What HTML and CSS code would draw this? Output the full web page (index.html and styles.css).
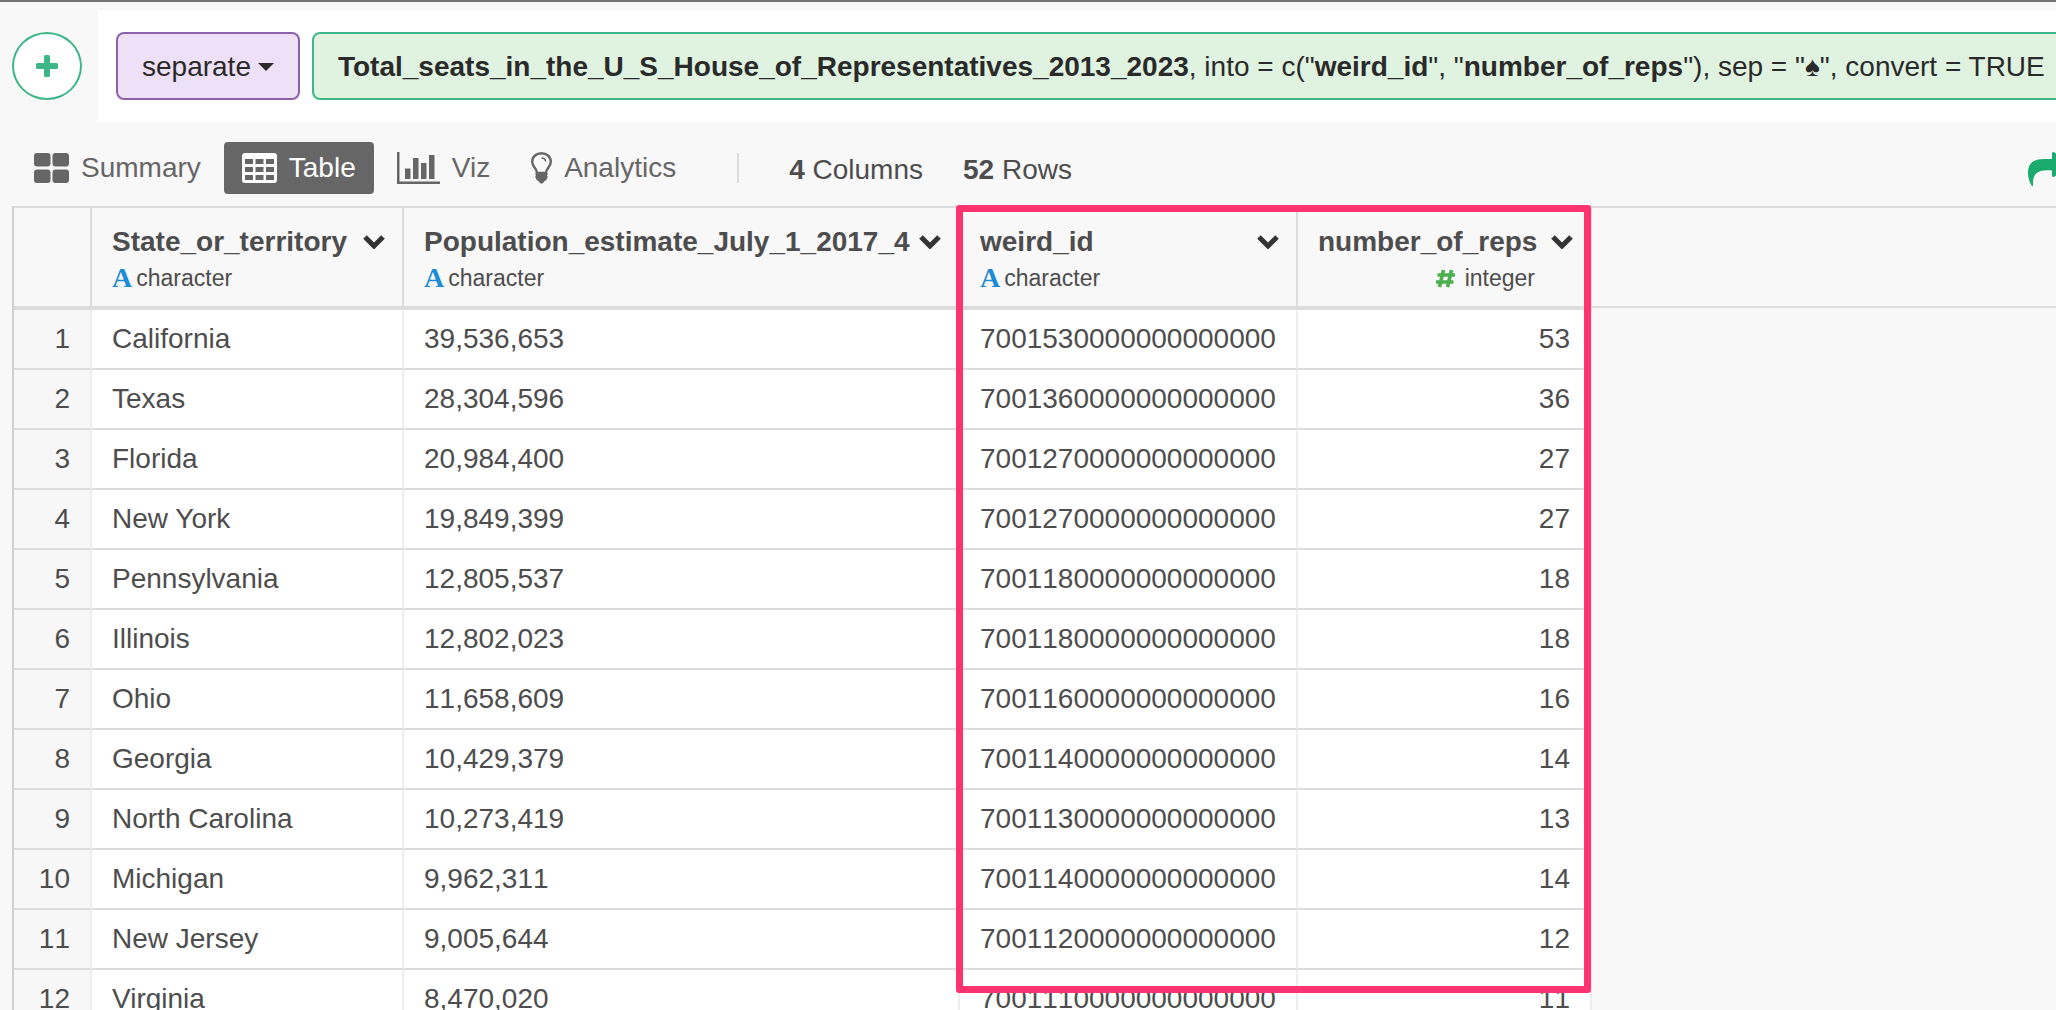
FILE: index.html
```html
<!DOCTYPE html>
<html lang="en">
<head>
  <meta charset="UTF-8">
  <meta name="viewport" content="width=device-width, initial-scale=1.0">
  <title>Data Table</title>
  <link rel="stylesheet" href="styles.css">
</head>
<body>
  <header class="command-bar">
    <button class="add-step" type="button" aria-label="Add step">
      <svg width="22" height="22" viewBox="0 0 22 22"><path d="M8 1.500A1.500 1.500 0 0 1 9.500 0h3A1.500 1.500 0 0 1 14 1.500V8h6.500A1.500 1.500 0 0 1 22 9.500v3a1.500 1.500 0 0 1-1.500 1.500H14v6.500a1.500 1.500 0 0 1-1.500 1.500h-3A1.500 1.500 0 0 1 8 20.500V14H1.500A1.500 1.500 0 0 1 0 12.500v-3A1.500 1.500 0 0 1 1.500 8H8z"/></svg>
    </button>
    <div class="command">
      <button class="verb" type="button">separate
        <svg width="16" height="8" viewBox="0 0 16 8"><path d="M0 0h16L8 8z"/></svg>
      </button>
      <button class="args" type="button"><b>Total_seats_in_the_U_S_House_of_Representatives_2013_2023</b>, into = c("<b>weird_id</b>", "<b>number_of_reps</b>"), sep = "♠", convert = TRUE</button>
    </div>
  </header>

  <nav class="toolbar">
    <button class="tab" type="button">
      <svg width="35" height="30" viewBox="0 0 35 30"><rect width="16.500" height="13.500" rx="3"/><rect x="18.500" width="16.500" height="13.500" rx="3"/><rect y="16.500" width="16.500" height="13.500" rx="3"/><rect x="18.500" y="16.500" width="16.500" height="13.500" rx="3"/></svg>
      Summary
    </button>
    <button class="tab active" type="button">
      <svg width="35" height="30" viewBox="0 0 35 30"><path fill-rule="evenodd" d="M3 0h29a3 3 0 0 1 3 3v24a3 3 0 0 1-3 3H3a3 3 0 0 1-3-3V3a3 3 0 0 1 3-3zM3 6v5h8V6zm10.500 0v5h8V6zM24 6v5h8V6zM3 14v5h8v-5zm10.500 0v5h8v-5zM24 14v5h8v-5zM3 22v5h8v-5zm10.500 0v5h8v-5zM24 22v5h8v-5z"/></svg>
      Table
    </button>
    <button class="tab" type="button">
      <svg width="43" height="32" viewBox="0 0 43 32"><path d="M0 0h2.500v29.500H43V32H0zM8 16.500h5.500V27H8zM16 6h5.500v21H16zM24 11h5.500v16H24zM32 3h5.500v24H32z"/></svg>
      Viz
    </button>
    <button class="tab" type="button">
      <svg width="21" height="32" viewBox="0 0 21 32"><path class="outline" d="M6 21C6 16.500 1.200 15 1.200 9.800 1.200 4.500 5.500 1.200 10.500 1.200s9.300 3.300 9.300 8.600c0 5.200-4.800 6.700-4.800 11.200z"/><path class="glint" d="M10.500 6c2.500 0 4 1.200 4 3.500"/><path d="M5 20.500h11c.8 1 .8 2 0 3 .8 1 .8 2 0 3-.5 2-2 2.500-3 3-.5 1.500-1.500 2-2.500 2s-2-.5-2.500-2c-1-.5-2.500-1-3-3-.8-1-.8-2 0-3-.8-1-.8-2 0-3z"/></svg>
      Analytics
    </button>
    <span class="divider"></span>
    <span class="count"><b>4</b> Columns</span>
    <span class="count"><b>52</b> Rows</span>
    <button class="share" type="button" aria-label="Share">
      <svg width="44" height="36" viewBox="0 0 44 36"><path d="M24 7V1.500c0-1.500 1.500-2 2.500-1L42 12c1 .8 1 1.800 0 2.500L26.500 24.500c-1 1-2.500.5-2.500-1V18.500c-12-1-19.500 1-19 14.500 0 1.500-1 1.500-1.500.5C1.500 30 0 26 0 21 0 10 7 7 16 7z"/></svg>
    </button>
  </nav>

  <main class="grid">
    <table class="data">
      <colgroup>
        <col class="col-index"><col class="col-state"><col class="col-population"><col class="col-id"><col class="col-reps">
      </colgroup>
      <thead>
        <tr>
          <td></td>
          <th scope="col">
            <div class="name">State_or_territory <svg width="22" height="14" viewBox="0 0 22 14"><path d="M2 2l9 9 9-9"/></svg></div>
            <div class="type"><span class="type-text">A</span>character</div>
          </th>
          <th scope="col">
            <div class="name">Population_estimate_July_1_2017_4 <svg width="22" height="14" viewBox="0 0 22 14"><path d="M2 2l9 9 9-9"/></svg></div>
            <div class="type"><span class="type-text">A</span>character</div>
          </th>
          <th scope="col">
            <div class="name">weird_id <svg width="22" height="14" viewBox="0 0 22 14"><path d="M2 2l9 9 9-9"/></svg></div>
            <div class="type"><span class="type-text">A</span>character</div>
          </th>
          <th scope="col">
            <div class="name">number_of_reps <svg width="22" height="14" viewBox="0 0 22 14"><path d="M2 2l9 9 9-9"/></svg></div>
            <div class="type numeric"><svg class="type-number" width="21" height="19" viewBox="0 0 21 19"><path d="M8.500 1L4.500 18M16.500 1l-4 17M2.500 6H20M1 13h17.500"/></svg>integer</div>
          </th>
        </tr>
      </thead>
      <tbody>
        <tr><td>1</td><td>California</td><td>39,536,653</td><td>7001530000000000000</td><td>53</td></tr>
        <tr><td>2</td><td>Texas</td><td>28,304,596</td><td>7001360000000000000</td><td>36</td></tr>
        <tr><td>3</td><td>Florida</td><td>20,984,400</td><td>7001270000000000000</td><td>27</td></tr>
        <tr><td>4</td><td>New York</td><td>19,849,399</td><td>7001270000000000000</td><td>27</td></tr>
        <tr><td>5</td><td>Pennsylvania</td><td>12,805,537</td><td>7001180000000000000</td><td>18</td></tr>
        <tr><td>6</td><td>Illinois</td><td>12,802,023</td><td>7001180000000000000</td><td>18</td></tr>
        <tr><td>7</td><td>Ohio</td><td>11,658,609</td><td>7001160000000000000</td><td>16</td></tr>
        <tr><td>8</td><td>Georgia</td><td>10,429,379</td><td>7001140000000000000</td><td>14</td></tr>
        <tr><td>9</td><td>North Carolina</td><td>10,273,419</td><td>7001130000000000000</td><td>13</td></tr>
        <tr><td>10</td><td>Michigan</td><td>9,962,311</td><td>7001140000000000000</td><td>14</td></tr>
        <tr><td>11</td><td>New Jersey</td><td>9,005,644</td><td>7001120000000000000</td><td>12</td></tr>
        <tr><td>12</td><td>Virginia</td><td>8,470,020</td><td>7001110000000000000</td><td>11</td></tr>
      </tbody>
    </table>
    <div class="header-rest"></div>
    <div class="highlight"></div>
  </main>
</body>
</html>
```
FILE: styles.css
```css
* {
  box-sizing: border-box;
}

body {
  margin: 0;
  height: 100vh;
  overflow: hidden;
  border-top: 2px solid #757373;
  background: #f8f8f8;
  color: #4d4d4d;
  font-family: "Liberation Sans", Arial, sans-serif;
  font-size: 28px;
}

button {
  margin: 0;
  padding: 0;
  border: none;
  background: none;
  color: inherit;
  font: inherit;
  white-space: nowrap;
  cursor: pointer;
}

svg {
  flex: none;
  fill: currentColor;
}

/* Command bar */
.command-bar {
  display: flex;
  align-items: center;
  gap: 16px;
  padding: 8px 0 0 12px;
}

.add-step {
  display: flex;
  flex: none;
  align-items: center;
  justify-content: center;
  width: 70px;
  height: 68px;
  border: 2px solid #3fb687;
  border-radius: 50%;
  background: #fff;
  color: #3fb687;
}

.command {
  display: flex;
  flex: 1;
  gap: 12px;
  min-width: 0;
  padding: 22px 0 22px 18px;
  background: #fff;
  overflow: hidden;
}

.verb,
.args {
  flex: none;
  height: 68px;
  padding: 2px 24px 0;
  border: 2px solid;
  border-radius: 8px;
  color: #2a2a2a;
}

.verb {
  display: flex;
  align-items: center;
  gap: 7px;
  border-color: #8c62a9;
  background: #eee0f7;
}

.args {
  border-color: #3fb687;
  background: #dff3e0;
}

/* Toolbar */
.toolbar {
  display: flex;
  align-items: center;
  gap: 5px;
  padding: 20px 0 12px 16px;
  overflow: hidden;
}

.tab {
  display: flex;
  align-items: center;
  gap: 12px;
  height: 52px;
  padding: 0 18px;
  border-radius: 4px;
  color: #666;
}

.tab.active {
  background: #666;
  color: #fff;
}

.outline,
.glint {
  fill: none;
  stroke: currentColor;
  stroke-width: 2.4;
}

.glint {
  stroke-width: 1.4;
}

.divider {
  width: 2px;
  height: 30px;
  margin: 0 45px 0 38px;
  background: #ddd;
}

.count {
  margin-right: 35px;
  padding-top: 4px;
}

.share {
  display: flex;
  margin: 4px -16px 0 auto;
  color: #1aaa6e;
}

/* Data grid */
.grid {
  display: flex;
  align-items: flex-start;
  position: relative;
  margin-left: 12px;
  border-top: 2px solid #dcdcdc;
  border-left: 2px solid #d0d0d0;
}

.data {
  flex: none;
  table-layout: fixed;
  width: 1578px;
  border-spacing: 0;
}

.col-index { width: 78px; }
.col-state { width: 312px; }
.col-population { width: 556px; }
.col-id { width: 338px; }
.col-reps { width: 294px; }

.data th,
.data thead td {
  height: 102px;
  padding: 6px 17px 0 20px;
  border-right: 2px solid #dcdcdc;
  border-bottom: 4px solid #dcdcdc;
  text-align: left;
}

.data tbody td {
  height: 60px;
  padding: 0 20px;
  border-right: 2px solid #eee;
  border-bottom: 2px solid #dcdcdc;
  background: #fff;
  font-kerning: none;
}

.data tbody td:nth-child(2) {
  font-kerning: normal;
}

.data tbody td:first-child {
  background: #f7f7f7;
  text-align: right;
}

.data tbody td:last-child {
  text-align: right;
}

.name {
  display: flex;
  align-items: center;
  justify-content: space-between;
  line-height: 36px;
}

.name svg {
  fill: none;
  stroke: #333;
  stroke-width: 5;
}

.type {
  display: flex;
  align-items: center;
  gap: 4px;
  font-size: 23px;
  font-weight: normal;
  line-height: 36px;
}

.type.numeric {
  justify-content: flex-end;
  gap: 9px;
  padding-right: 38px;
}

.type-text {
  color: #1c8cd4;
  font-family: "Liberation Serif", serif;
  font-size: 28px;
  font-weight: bold;
}

.type-number {
  fill: none;
  stroke: #4caf50;
  stroke-width: 3.6;
}

.header-rest {
  flex: 1;
  height: 100px;
  border-bottom: 2px solid #dcdcdc;
}

/* Marks the two columns made by the separate step */
.highlight {
  position: absolute;
  top: -3px;
  left: 942px;
  width: 635px;
  height: 788px;
  border: 7px solid #ff336f;
  border-radius: 3px;
}
```
